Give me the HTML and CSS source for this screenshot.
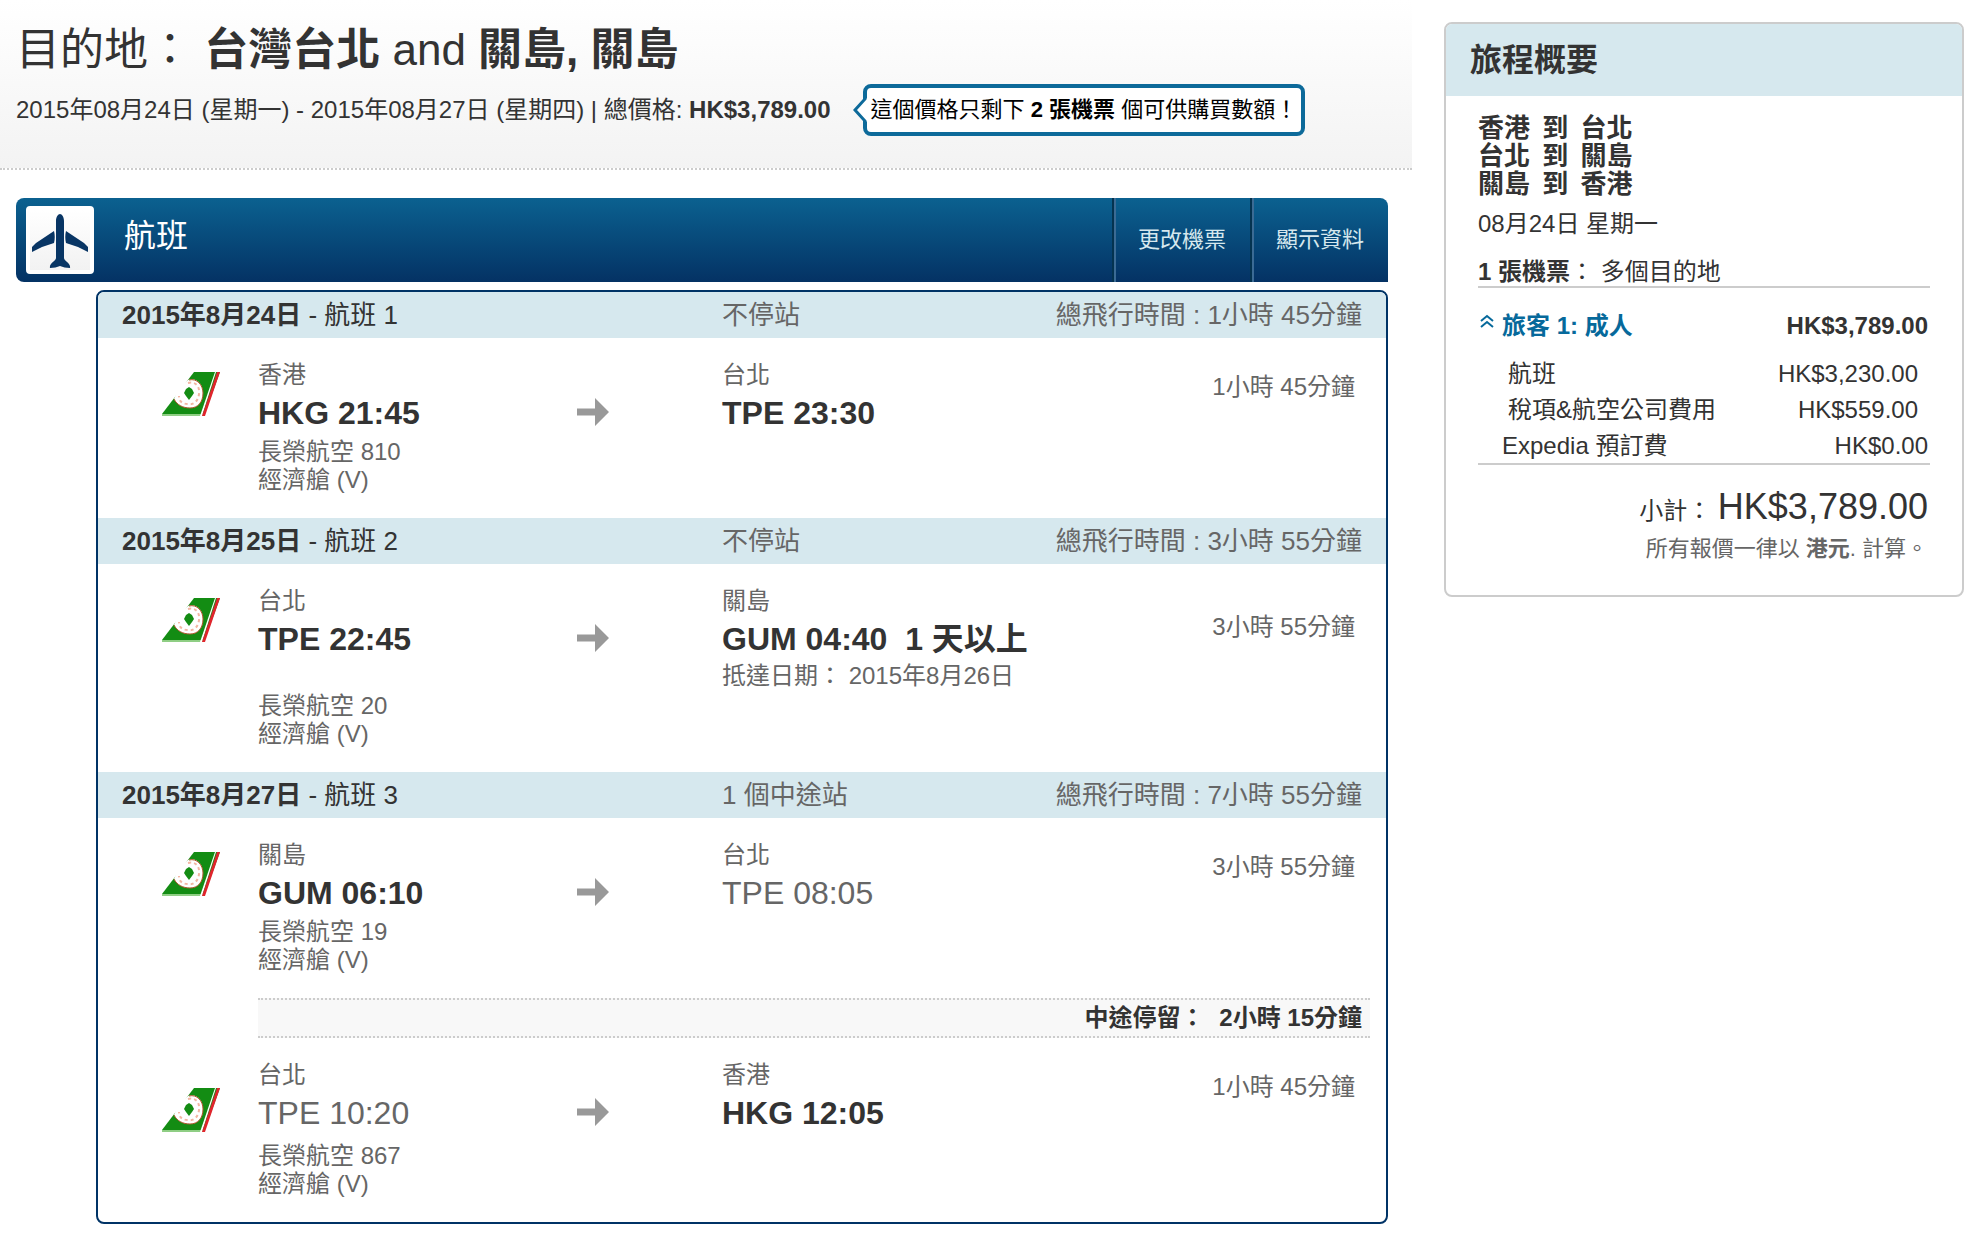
FILE: index.html
```html
<!DOCTYPE html>
<html lang="zh-Hant">
<head>
<meta charset="utf-8">
<meta name="viewport" content="width=device-width, initial-scale=1">
<title>目的地：台灣台北 and 關島, 關島</title>
<link rel="stylesheet" href="styles.css">
</head>
<body>
<svg class="symbols" aria-hidden="true">
  <symbol id="airline" viewBox="0 0 58 44">
    <path fill="#138c13" d="M32 0H58L42 44H0V42Z"/>
    <path fill="#8fce84" d="M0 42H42V44H0Z"/>
    <path fill="#fff" d="M53 0H54L40 44H38Z"/>
    <path fill="#e0242c" d="M55 0H58L43 44H40Z"/>
    <path fill="#fff" d="M26 8C34 5 41 12 41 21C41 30 36 36 28 36C21 36 15 33 12 27L16 17Z"/>
    <path fill="none" stroke="#b0562c" stroke-width="1" d="M27 8C35 6 41 13 41 21C41 30 36 36 28 36C21 36 15 33 12 27"/>
    <path fill="none" stroke="#f3b5a2" stroke-width="2" stroke-dasharray="3 3" d="M26 11C34 9 38 15 37 22C36 30 31 33 26 32C20 32 17 29 17 24"/>
    <path fill="#138c13" d="M27 15L30 17L32 21L30 24L27 28L24 24L22 21L24 17Z"/>
  </symbol>
  <symbol id="arrow" viewBox="0 0 32 28">
    <path fill="#999" d="M0 10.500H18V0L32 14L18 28V17.500H0Z"/>
  </symbol>
</svg>

<div class="page">
  <main class="main">
    <header class="trip">
      <h1 class="trip-title">目的地： <b>台灣台北</b> and <b>關島, 關島</b></h1>
      <div class="trip-info">
        <p class="trip-dates">2015年08月24日 (星期一) - 2015年08月27日 (星期四) | 總價格: <b>HK$3,789.00</b></p>
        <p class="notice">
          <svg class="notice-tail" viewBox="0 0 14 24" aria-hidden="true"><path fill="#fff" d="M14 0L1.500 12L14 24Z"/><path fill="none" stroke="#0d6a9a" stroke-width="3" d="M12 0V1L2 12L12 23V24"/></svg>
          這個價格只剩下 <b>2 張機票</b> 個可供購買數額！
        </p>
      </div>
    </header>

    <section class="flights">
      <div class="bar">
        <span class="bar-icon">
          <svg viewBox="0 0 68 68" aria-hidden="true"><path fill="#083564" d="M34 8C36 8 38 11 38 15V52C38 55 45 57 44 62C40 62 37 61 34 60C31 61 28 62 24 62C23 57 30 55 30 52V15C30 11 32 8 34 8ZM28 25C29 29 29 33 28 37L16 41L6 46V41L10 37ZM40 25C39 29 39 33 40 37L52 41L62 46V41L58 37Z"/></svg>
        </span>
        <h2 class="bar-title">航班</h2>
        <a class="bar-action" href="#change">更改機票</a>
        <button class="bar-action" type="button">顯示資料</button>
      </div>

      <div class="panel">
        <div class="band">
          <h3 class="band-date"><b>2015年8月24日</b> - 航班 1</h3>
          <span>不停站</span>
          <span class="band-total">總飛行時間 : 1小時 45分鐘</span>
        </div>
        <div class="leg">
          <svg class="leg-logo" role="img" aria-label="長榮航空"><use href="#airline"/></svg>
          <div class="stop"><p class="city">香港</p><p class="code"><b>HKG 21:45</b></p></div>
          <svg class="leg-arrow" aria-hidden="true"><use href="#arrow"/></svg>
          <div class="stop"><p class="city">台北</p><p class="code"><b>TPE 23:30</b></p></div>
          <p class="duration">1小時 45分鐘</p>
          <p class="carrier">長榮航空 810<br>經濟艙 (V)</p>
        </div>

        <div class="band">
          <h3 class="band-date"><b>2015年8月25日</b> - 航班 2</h3>
          <span>不停站</span>
          <span class="band-total">總飛行時間 : 3小時 55分鐘</span>
        </div>
        <div class="leg">
          <svg class="leg-logo" role="img" aria-label="長榮航空"><use href="#airline"/></svg>
          <div class="stop"><p class="city">台北</p><p class="code"><b>TPE 22:45</b></p></div>
          <svg class="leg-arrow" aria-hidden="true"><use href="#arrow"/></svg>
          <div class="stop"><p class="city">關島</p><p class="code"><b>GUM 04:40&nbsp; 1 天以上</b></p><p class="arrival">抵達日期： 2015年8月26日</p></div>
          <p class="duration">3小時 55分鐘</p>
          <p class="carrier">長榮航空 20<br>經濟艙 (V)</p>
        </div>

        <div class="band">
          <h3 class="band-date"><b>2015年8月27日</b> - 航班 3</h3>
          <span>1 個中途站</span>
          <span class="band-total">總飛行時間 : 7小時 55分鐘</span>
        </div>
        <div class="leg">
          <svg class="leg-logo" role="img" aria-label="長榮航空"><use href="#airline"/></svg>
          <div class="stop"><p class="city">關島</p><p class="code"><b>GUM 06:10</b></p></div>
          <svg class="leg-arrow" aria-hidden="true"><use href="#arrow"/></svg>
          <div class="stop"><p class="city">台北</p><p class="code">TPE 08:05</p></div>
          <p class="duration">3小時 55分鐘</p>
          <p class="carrier">長榮航空 19<br>經濟艙 (V)</p>
        </div>
        <p class="layover">中途停留： <span>2小時 15分鐘</span></p>
        <div class="leg leg-connecting">
          <svg class="leg-logo" role="img" aria-label="長榮航空"><use href="#airline"/></svg>
          <div class="stop"><p class="city">台北</p><p class="code">TPE 10:20</p></div>
          <svg class="leg-arrow" aria-hidden="true"><use href="#arrow"/></svg>
          <div class="stop"><p class="city">香港</p><p class="code"><b>HKG 12:05</b></p></div>
          <p class="duration">1小時 45分鐘</p>
          <p class="carrier">長榮航空 867<br>經濟艙 (V)</p>
        </div>
      </div>
    </section>
  </main>

  <aside class="summary">
    <h2 class="summary-title">旅程概要</h2>
    <div class="summary-body">
      <ul class="routes">
        <li>香港 <span class="to">到</span> 台北</li>
        <li>台北 <span class="to">到</span> 關島</li>
        <li>關島 <span class="to">到</span> 香港</li>
      </ul>
      <p class="summary-date">08月24日 星期一</p>
      <p class="tickets"><b>1 張機票</b>： 多個目的地</p>
      <table class="prices">
        <tbody>
          <tr class="traveler">
            <th scope="row"><button class="toggle" type="button"><svg class="chevrons" viewBox="0 0 14 14" aria-hidden="true"><path fill="none" stroke="#06699b" stroke-width="2" d="M1 7L7 2L13 7M1 13L7 8L13 13"/></svg>旅客 1: 成人</button></th>
            <td>HK$3,789.00</td>
          </tr>
          <tr class="detail"><th scope="row">航班</th><td>HK$3,230.00</td></tr>
          <tr class="detail"><th scope="row">稅項&amp;航空公司費用</th><td>HK$559.00</td></tr>
          <tr><th scope="row">Expedia 預訂費</th><td>HK$0.00</td></tr>
        </tbody>
      </table>
      <p class="subtotal">小計： <span class="subtotal-price">HK$3,789.00</span></p>
      <p class="currency">所有報價一律以 <b>港元</b>. 計算。</p>
    </div>
  </aside>
</div>
</body>
</html>
```
FILE: styles.css
```css
* {
  box-sizing: border-box;
}

body,
h1,
h2,
h3,
p,
ul {
  margin: 0;
  padding: 0;
}

body {
  background: #fff;
  color: #333;
  font: 24px/28px "Liberation Sans", "Noto Sans CJK TC", sans-serif;
}

h1,
h2,
h3 {
  font-weight: normal;
}

button {
  border: 0;
  background: none;
  font: inherit;
  cursor: pointer;
}

.symbols {
  display: none;
}

.page {
  display: flex;
  align-items: flex-start;
  gap: 32px;
  padding-right: 24px;
}

.main {
  flex: 1;
  min-width: 0;
}

/* Trip heading */

.trip {
  padding: 22px 16px 32px;
  border-bottom: 2px dotted #ccc;
  background: linear-gradient(#fff, #f3f3f3);
}

.trip-title {
  padding-bottom: 6px;
  font-size: 44px;
  line-height: 56px;
}

.trip-info {
  display: flex;
  align-items: center;
  gap: 32px;
}

.trip-dates,
.notice {
  white-space: nowrap;
}

.notice {
  position: relative;
  padding: 8px 4px;
  border: 4px solid #0d6a9a;
  border-radius: 8px;
  background: #fff;
  color: #000;
  font-size: 22px;
}

.notice-tail {
  position: absolute;
  top: 10px;
  left: -14px;
  width: 14px;
  height: 24px;
}

/* Flight details */

.flights {
  padding: 28px 24px 12px 16px;
}

.bar {
  display: flex;
  align-items: stretch;
  min-height: 84px;
  border-radius: 8px 8px 0 8px;
  background: linear-gradient(#0b6190, #043264);
  overflow: hidden;
}

.bar-icon {
  width: 68px;
  height: 68px;
  margin: 8px 0 0 10px;
  border: 4px solid #fff;
  border-radius: 4px;
  background: linear-gradient(#fff, #f2f2f2);
}

.bar-icon svg {
  display: block;
  width: 68px;
  height: 68px;
  margin: -4px;
}

.bar-title {
  flex: 1;
  padding: 16px 0 0 30px;
  color: #fff;
  font-size: 32px;
  line-height: 44px;
}

.bar-action {
  display: flex;
  align-items: center;
  padding: 0 24px;
  border-left: 2px solid #043350;
  box-shadow: inset 2px 0 #3b6b94;
  color: #d6e8ee;
  font-size: 22px;
  text-decoration: none;
}

.panel {
  margin: 8px 0 0 80px;
  border: 2px solid #036;
  border-radius: 8px;
  overflow: hidden;
}

.band,
.leg {
  display: grid;
  grid-template-columns: 160px 319fr 145fr 314fr 350px;
  color: #666;
}

.band {
  background: #d6e8ee;
  font-size: 26px;
  line-height: 46px;
}

.band-date {
  grid-column: span 3;
  padding-left: 24px;
  color: #333;
  font-size: 26px;
}

.band-total {
  padding-right: 24px;
  text-align: right;
}

.leg {
  padding-bottom: 24px;
}

.leg-logo {
  width: 58px;
  height: 44px;
  margin: 34px 0 0 64px;
}

.stop {
  padding-top: 22px;
  white-space: nowrap;
}

.city {
  line-height: 30px;
}

.code {
  font-size: 32px;
  line-height: 46px;
}

.code b {
  color: #333;
}

.leg-arrow {
  width: 32px;
  height: 28px;
  margin-top: 60px;
}

.duration {
  align-self: center;
  padding-right: 31px;
  text-align: right;
}

.carrier {
  grid-column: 2 / -1;
  margin-top: 2px;
}

.leg-connecting .leg-logo {
  grid-row: span 2;
  margin-top: 50px;
}

.leg-connecting .carrier {
  margin-top: 6px;
}

.layover {
  margin: 0 16px 0 160px;
  padding-right: 8px;
  border: dotted #ccc;
  border-width: 2px 0;
  background: #f8f8f8;
  font-weight: bold;
  line-height: 36px;
  text-align: right;
}

.layover span {
  margin-left: 8px;
}

/* Trip summary */

.summary {
  width: 520px;
  margin-top: 22px;
  border: 2px solid #ccc;
  border-radius: 8px;
  overflow: hidden;
}

.summary-title {
  padding-left: 24px;
  background: #d6e8ee;
  font-size: 32px;
  font-weight: bold;
  line-height: 72px;
}

.summary-body {
  padding: 18px 32px 32px;
}

.routes {
  list-style: none;
  font-size: 26px;
  font-weight: bold;
}

.to {
  margin: 0 5px;
}

.summary-date {
  padding: 12px 0 20px;
}

.tickets {
  border-bottom: 2px solid #ccc;
}

.prices {
  width: 100%;
  margin-top: 8px;
  border-collapse: collapse;
  border-bottom: 2px solid #ccc;
}

.prices th,
.prices td {
  height: 36px;
  padding: 0 2px 0 24px;
  font-weight: normal;
  text-align: left;
}

.prices td {
  padding-left: 0;
  text-align: right;
}

.prices .traveler th,
.prices .traveler td {
  height: 60px;
  padding-left: 0;
  font-weight: bold;
}

.prices .detail th {
  padding-left: 30px;
}

.prices .detail td {
  padding-right: 12px;
}

.toggle {
  display: flex;
  gap: 8px;
  padding: 0 0 0 2px;
  color: #06699b;
}

.chevrons {
  width: 14px;
  height: 14px;
  margin-top: 2px;
}

.subtotal {
  padding: 20px 2px 2px 0;
  line-height: 44px;
  text-align: right;
}

.subtotal-price {
  font-size: 36px;
}

.currency {
  padding-right: 2px;
  color: #666;
  font-size: 22px;
  text-align: right;
}
```
